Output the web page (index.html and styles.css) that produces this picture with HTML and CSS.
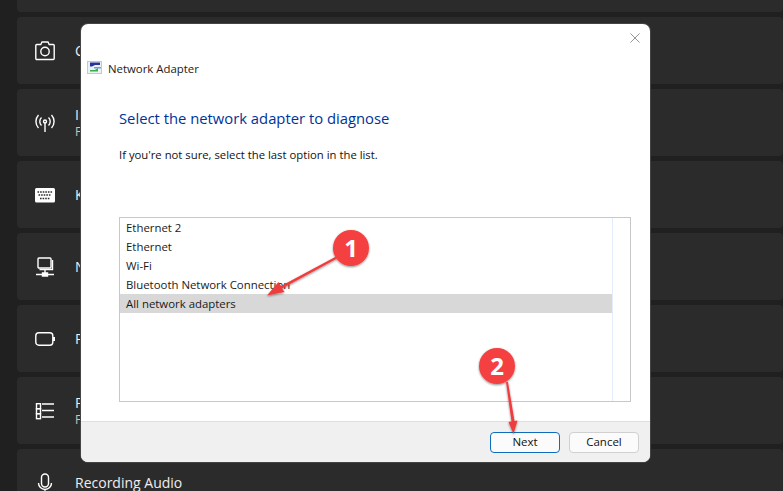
FILE: index.html
```html
<!DOCTYPE html>
<html lang="en">
<head>
<meta charset="utf-8">
<title>Network Adapter</title>
<link rel="stylesheet" href="styles.css">
</head>
<body>
<main class="cards">
  <section class="card"></section>
  <section class="card">
    <svg class="icon" viewBox="0 0 20 20"><path d="M5.800 3.500 7 1h6l1.200 2.500h4a1 1 0 0 1 1 1v13a1 1 0 0 1-1 1H1.800a1 1 0 0 1-1-1v-13a1 1 0 0 1 1-1z"/><circle cx="10" cy="10.500" r="4.200"/></svg>
    <div class="label"><div class="title">Camera</div></div>
  </section>
  <section class="card">
    <svg class="icon" viewBox="0 0 20 20"><circle cx="10" cy="8.500" r="1.500"/><path d="M10 10v9M6.500 12.500a5.500 5.500 0 0 1 0-8M13.500 4.500a5.500 5.500 0 0 1 0 8M3.500 15a9.500 9.500 0 0 1 0-13M16.500 2a9.500 9.500 0 0 1 0 13"/></svg>
    <div class="label"><div class="title">Incoming Connections</div><div class="sub">Find and fix problems with incoming connections and Windows Firewall</div></div>
  </section>
  <section class="card">
    <svg class="icon" viewBox="0 0 20 20"><rect class="solid" x="0" y="3" width="20" height="14.500" rx="1.500"/><path class="keys" d="M2.500 7h15M3.500 10h13M5 13.500h10"/></svg>
    <div class="label"><div class="title">Keyboard</div></div>
  </section>
  <section class="card">
    <svg class="icon" viewBox="0 0 20 20"><rect x="3" y="1" width="13" height="10" rx="1"/><path d="M17.500 3v9.500H4.500M10 12.500v3.500M1 17.500h18M7.500 16h5v3h-5z"/></svg>
    <div class="label"><div class="title">Network Adapter</div></div>
  </section>
  <section class="card">
    <svg class="icon" viewBox="0 0 20 20"><rect x="0.800" y="3.800" width="17" height="12.400" rx="3"/><path class="solid" d="M18 8h2v4h-2z"/></svg>
    <div class="label"><div class="title">Power</div></div>
  </section>
  <section class="card">
    <svg class="icon" viewBox="0 0 20 20"><rect x="1.500" y="2.700" width="4" height="5"/><rect x="1.500" y="7.700" width="4" height="5"/><rect x="1.500" y="12.700" width="4" height="5"/><path d="M7 3h12M7 9.500h12M7 16h12"/></svg>
    <div class="label"><div class="title">Program Compatibility Troubleshooter</div><div class="sub">Find and fix problems with running older programs on this version of Windows</div></div>
  </section>
  <section class="card">
    <svg class="icon" viewBox="0 0 20 20"><rect x="6.500" y="1" width="7" height="13" rx="3.500"/><path d="M3.500 10a6.500 6.500 0 0 0 13 0M10 16.500v3.500"/></svg>
    <div class="label"><div class="title">Recording Audio</div></div>
  </section>
</main>

<div class="dialog">
  <svg class="close" viewBox="0 0 11 11"><path d="M.5.500l10 10M10.500.500l-10 10"/></svg>
  <div class="dialog-body">
    <header class="dialog-head">
      <svg class="app-icon" viewBox="0 0 15 13">
        <rect x="0" y="0" width="15" height="13" fill="#c4cacb"/>
        <rect x="1" y="1" width="13" height="11" fill="#eef1f1"/>
        <path d="M3 1.500h10v2.500H8L5 5.500H3z" fill="#26349c"/>
        <path d="M7 6h7v1.500H7z" fill="#6fa2d8"/>
        <path d="M3 9h5l3-2v3.500H3z" fill="#35b04a"/>
      </svg>
      <span>Network Adapter</span>
    </header>
    <h1 class="heading">Select the network adapter to diagnose</h1>
    <p class="hint">If you're not sure, select the last option in the list.</p>
    <div class="listbox">
      <ul class="options">
        <li>Ethernet 2</li>
        <li>Ethernet</li>
        <li>Wi-Fi</li>
        <li>Bluetooth Network Connection</li>
        <li class="selected">All network adapters</li>
      </ul>
      <div class="scroll-gutter"></div>
    </div>
  </div>
  <footer class="dialog-foot">
    <button class="btn primary">Next</button>
    <button class="btn">Cancel</button>
  </footer>
</div>

<svg class="marks" viewBox="0 0 783 491">
  <defs>
    <filter id="sh" x="-20%" y="-20%" width="140%" height="140%"><feDropShadow dx="0" dy="1" stdDeviation="0.8" flood-color="#000" flood-opacity=".45"/></filter>
  </defs>
  <g filter="url(#sh)">
    <path class="arrow" d="M338 258 282 288.500 284.500 292 267 295.500 278.500 282 281 286 337 256z"/>
    <circle class="dot" cx="351" cy="248" r="18"/>
    <path class="arrow" d="M506 382 508 382 514.500 421 517.500 420.500 513.500 434 508.500 422 511.500 421.500z"/>
    <circle class="dot" cx="497" cy="366" r="18"/>
  </g>
  <text class="num" x="351" y="256.500">1</text>
  <text class="num" x="497" y="374.500">2</text>
</svg>
</body>
</html>
```
FILE: styles.css
```css
* { box-sizing: border-box; }
html, body { margin: 0; height: 100%; }
body {
  position: relative;
  width: 783px;
  height: 491px;
  overflow: hidden;
  background: #202020;
  font-family: "Open Sans", "Noto Sans", sans-serif;
}
.cards {
  display: flex;
  flex-direction: column;
  gap: 5px;
  height: 546px;
  overflow: hidden;
  margin-top: -55px;
  padding: 0 0 0 17px;
}
.card {
  flex: 0 0 67px;
  display: flex;
  align-items: center;
  gap: 20px;
  padding-left: 18px;
  background: #2b2b2b;
  border-radius: 4px;
  color: #fff;
}
.icon {
  width: 20px;
  height: 20px;
  flex: none;
  fill: none;
  stroke: #fff;
  stroke-width: 1.4;
}
.icon .solid { fill: #fff; stroke: none; }
.icon .keys { stroke: #2b2b2b; stroke-width: 1.300; stroke-dasharray: 1.600 1; }
.title { font-size: 14px; line-height: 19px; color: #eee; white-space: nowrap; }
.sub { font-size: 12px; line-height: 16px; color: #c5c5c5; white-space: nowrap; }

.dialog {
  position: absolute;
  left: 81px;
  top: 24px;
  width: 569px;
  height: 438px;
  display: flex;
  flex-direction: column;
  background: #fff;
  border-radius: 7px;
  overflow: hidden;
  color: #000;
  box-shadow: 0 0 0 1px #444;
}
.close {
  position: absolute;
  right: 10px;
  top: 9px;
  width: 10px;
  height: 10px;
  fill: none;
  stroke: #8a8a8a;
  stroke-width: 1;
}
.dialog-body {
  flex: 1;
  padding: 35px 18px 0 6px;
}
.dialog-head {
  display: flex;
  align-items: center;
  gap: 6px;
  height: 18px;
  font-size: 11.400px;
  color: #1a1a1a;
}
.app-icon { width: 15px; height: 13px; flex: none; margin-top: -2px; }
.heading {
  margin: 31px 0 0 32px;
  font-size: 14.800px;
  line-height: 20px;
  font-weight: 400;
  color: #003399;
}
.hint {
  margin: 19px 0 0 32px;
  font-size: 11.300px;
  line-height: 16px;
  color: #111;
}
.listbox {
  display: flex;
  width: 512px;
  height: 185px;
  margin: 54px 0 0 32px;
  border: 1px solid #c8c8c8;
}
.options {
  flex: 1;
  margin: 0;
  padding: 0;
  list-style: none;
  border-right: 1px solid #e3ecfa;
  font-size: 11.400px;
}
.options li {
  height: 19px;
  line-height: 19px;
  padding-left: 6px;
  color: #1a1a1a;
}
.options .selected { background: #d8d8d8; }
.scroll-gutter { width: 17px; flex: none; }
.dialog-foot {
  flex: 0 0 41px;
  display: flex;
  justify-content: flex-end;
  align-items: flex-start;
  gap: 9px;
  padding: 10px 11px 0 0;
  background: #f0f0f0;
  border-top: 1px solid #dfdfdf;
}
.btn {
  width: 70px;
  height: 21px;
  padding: 0 0 2px;
  font: 11.500px/17px "Open Sans", "Noto Sans", sans-serif;
  color: #111;
  background: #fbfbfb;
  border: 1px solid #d0d0d0;
  border-radius: 4px;
}
.btn.primary { border-color: #0f6cbd; }

.marks {
  position: absolute;
  left: 0;
  top: 0;
  width: 783px;
  height: 491px;
  pointer-events: none;
}
.arrow { fill: #ef3e3e; }
.dot { fill: #f43f3f; }
.num {
  font: 700 24px "Open Sans", "Liberation Sans", sans-serif;
  fill: #fff;
  text-anchor: middle;
}
```
